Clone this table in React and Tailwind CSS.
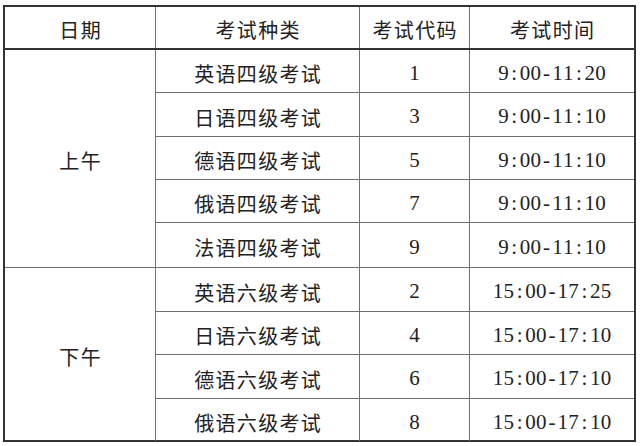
import React from "react";

const cjk = "font-['Noto_Sans_CJK_SC',sans-serif] text-[20px] tracking-[1.3px] text-[#222]";
const num = "font-['Liberation_Serif',serif] text-[21px] text-[#222]";

function Mono({ text }) {
  return (
    <span className="inline-flex">
      {text.split("").map((c, i) => (
        <span key={i} className="inline-block w-[10.8px] text-center">
          {c}
        </span>
      ))}
    </span>
  );
}

const am = [
  ["英语四级考试", "1", "9:00-11:20"],
  ["日语四级考试", "3", "9:00-11:10"],
  ["德语四级考试", "5", "9:00-11:10"],
  ["俄语四级考试", "7", "9:00-11:10"],
  ["法语四级考试", "9", "9:00-11:10"],
];
const pm = [
  ["英语六级考试", "2", "15:00-17:25"],
  ["日语六级考试", "4", "15:00-17:10"],
  ["德语六级考试", "6", "15:00-17:10"],
  ["俄语六级考试", "8", "15:00-17:10"],
];

const amH = [43, 44, 43, 43, 44];
const pmH = [44, 43, 44, 42];

function Row({ r, h, last }) {
  const bb = last ? "" : "border-b border-[#707070]";
  return (
    <div className="flex" style={{ height: h }}>
      <div className={`w-[204px] shrink-0 border-r border-[#707070] ${bb} flex items-center justify-center pt-[6px] ${cjk}`}>
        <span className="pl-[1.3px]">{r[0]}</span>
      </div>
      <div className={`w-[110px] shrink-0 border-r border-[#707070] ${bb} flex items-center justify-center pt-[5px] ${num}`}>
        {r[1]}
      </div>
      <div className={`flex-1 ${bb} flex items-center justify-center pt-[5px] ${num}`}>
        <Mono text={r[2]} />
      </div>
    </div>
  );
}

export default function App() {
  return (
    <div className="w-[640px] h-[446px] bg-white pt-[5px] pl-[3px]">
      <div className="w-[633px] h-[437px] border-2 border-[#333] flex flex-col">
        <div className="flex h-[43px] border-b-2 border-[#333] shrink-0">
          <div className={`w-[151px] shrink-0 border-r border-[#707070] flex items-center justify-center pt-[5px] ${cjk}`}>
            <span className="pl-[1.3px]">日期</span>
          </div>
          <div className={`w-[204px] shrink-0 border-r border-[#707070] flex items-center justify-center pt-[5px] ${cjk}`}>
            <span className="pl-[1.3px]">考试种类</span>
          </div>
          <div className={`w-[110px] shrink-0 border-r border-[#707070] flex items-center justify-center pt-[5px] ${cjk}`}>
            <span className="pl-[1.3px]">考试代码</span>
          </div>
          <div className={`flex-1 flex items-center justify-center pt-[5px] ${cjk}`}>
            <span className="pl-[1.3px]">考试时间</span>
          </div>
        </div>
        <div className="flex border-b border-[#707070] shrink-0">
          <div className={`w-[151px] shrink-0 border-r border-[#707070] flex items-center justify-center pt-[5px] ${cjk}`}>
            <span className="pl-[1.3px]">上午</span>
          </div>
          <div className="flex-1 flex flex-col">
            {am.map((r, i) => (
              <Row key={i} r={r} h={amH[i]} last={i === am.length - 1} />
            ))}
          </div>
        </div>
        <div className="flex flex-1">
          <div className={`w-[151px] shrink-0 border-r border-[#707070] flex items-center justify-center pt-[5px] ${cjk}`}>
            <span className="pl-[1.3px]">下午</span>
          </div>
          <div className="flex-1 flex flex-col">
            {pm.map((r, i) => (
              <Row key={i} r={r} h={pmH[i]} last={i === pm.length - 1} />
            ))}
          </div>
        </div>
      </div>
    </div>
  );
}
